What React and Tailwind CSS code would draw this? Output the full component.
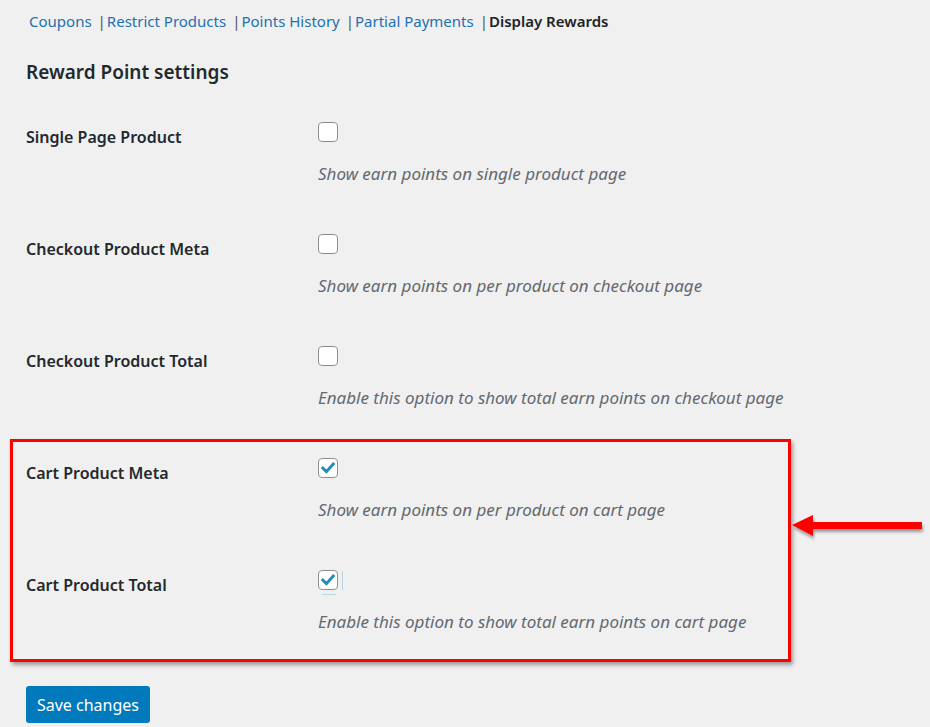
import React from "react";

const font = { fontFamily: '"Noto Sans", "Open Sans", Arial, sans-serif' };

const tabs = [
  { label: "Coupons", active: false },
  { label: "Restrict Products", active: false },
  { label: "Points History", active: false },
  { label: "Partial Payments", active: false },
  { label: "Display Rewards", active: true },
];

const rows = [
  { label: "Single Page Product", desc: "Show earn points on single product page", checked: false },
  { label: "Checkout Product Meta", desc: "Show earn points on per product on checkout page", checked: false },
  { label: "Checkout Product Total", desc: "Enable this option to show total earn points on checkout page", checked: false },
  { label: "Cart Product Meta", desc: "Show earn points on per product on cart page", checked: true },
  { label: "Cart Product Total", desc: "Enable this option to show total earn points on cart page", checked: true, focused: true },
];

function Checkbox({ checked, focused }) {
  return (
    <span className="relative flex h-[20px] w-[20px] items-center justify-center rounded-[4px] border border-[#8c8f94] bg-white">
      {checked && (
        <svg width="16" height="16" viewBox="0 0 20 20">
          <path d="M3.5 10 L8 14.5 L16.5 5" fill="none" stroke="#1e8cbe" strokeWidth="3.6" strokeLinecap="square" />
        </svg>
      )}
      {focused && (
        <>
          <span className="absolute left-[23px] top-[0px] h-[19px] w-px bg-[#b6d6ea]" />
          <span className="absolute left-[3px] top-[23px] h-px w-[14px] bg-[#b6d6ea]" />
        </>
      )}
    </span>
  );
}

function Row({ label, desc, checked, focused }) {
  return (
    <div className="flex h-[112px]">
      <div className="w-[292px] pt-[3px] text-[16px] font-semibold text-[#23282d]">{label}</div>
      <div className="flex flex-col">
        <Checkbox checked={checked} focused={focused} />
        <p className="mt-[19px] text-[17px] italic text-[#646970]">{desc}</p>
      </div>
    </div>
  );
}

export default function App() {
  return (
    <div className="min-h-[727px] w-[930px] bg-[#f0f0f0] pl-[26px]" style={font}>
      <nav className="flex items-center pt-[10px] text-[15px]">
        {tabs.map((t, i) => (
          <span key={t.label} className="flex items-center">
            {i > 0 && <span className="ml-[6px] mr-[1px] text-[#50575e]">|</span>}
            <span className={t.active ? "font-semibold text-[#1d2327]" : "text-[#2271b1]"}>{i === 0 ? <span className="pl-[3px]">{t.label}</span> : t.label}</span>
          </span>
        ))}
      </nav>
      <h2 className="mt-[25px] text-[19px] font-semibold text-[#23282d]">Reward Point settings</h2>
      <div className="mt-[36px]">
        {rows.slice(0, 3).map((r) => (
          <Row key={r.label} {...r} />
        ))}
        <div className="relative">
          {rows.slice(3).map((r) => (
            <Row key={r.label} {...r} />
          ))}
          {/* highlight frame around the cart options */}
          <div className="pointer-events-none absolute left-[-16px] top-[-19px] h-[223px] w-[781px] border-[3px] border-[#ff0000] shadow-[2px_3px_4px_rgba(0,0,0,0.35)]" />
          <svg className="absolute left-[766px] top-[54px]" width="134" height="30" viewBox="0 0 134 30">
            <defs>
              <filter id="arrowShadow" x="-10%" y="-30%" width="130%" height="180%">
                <feDropShadow dx="1" dy="3" stdDeviation="1.5" floodColor="#000" floodOpacity="0.35" />
              </filter>
            </defs>
            <g filter="url(#arrowShadow)" fill="#ff0000">
              <polygon points="0,13 21,3 21,10 130,10 130,17 21,17 21,24" />
            </g>
          </svg>
        </div>
      </div>
      <button className="mt-[4px] h-[37px] w-[124px] rounded-[3px] bg-[#0079bd] text-[16px] text-white">Save changes</button>
    </div>
  );
}
